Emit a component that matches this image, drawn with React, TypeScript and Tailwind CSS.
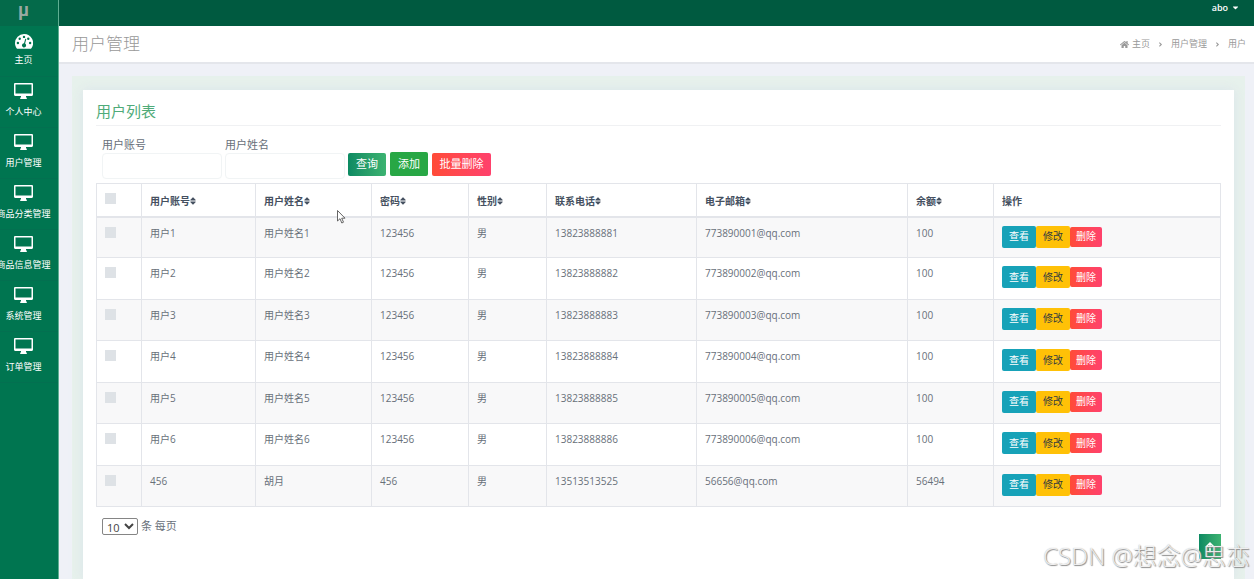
import { FaHome, FaSort, FaCaretDown, FaAngleRight } from "react-icons/fa";

type User = {
  account: string;
  name: string;
  password: string;
  gender: string;
  phone: string;
  email: string;
  balance: string;
};

const users: User[] = [
  ...[1, 2, 3, 4, 5, 6].map((n) => ({
    account: `用户${n}`,
    name: `用户姓名${n}`,
    password: "123456",
    gender: "男",
    phone: `1382388888${n}`,
    email: `77389000${n}@qq.com`,
    balance: "100",
  })),
  {
    account: "456",
    name: "胡月",
    password: "456",
    gender: "男",
    phone: "13513513525",
    email: "56656@qq.com",
    balance: "56494",
  },
];

const columns = [
  { label: "用户账号", width: "w-[114px]" },
  { label: "用户姓名", width: "w-[116px]" },
  { label: "密码", width: "w-[97px]" },
  { label: "性别", width: "w-[78px]" },
  { label: "联系电话", width: "w-[150px]" },
  { label: "电子邮箱", width: "w-[211px]" },
  { label: "余额", width: "w-[86px]" },
];

const menu = ["个人中心", "用户管理", "商品分类管理", "商品信息管理", "系统管理", "订单管理"];

const DashboardIcon = () => (
  <svg viewBox="0 0 18 15" className="h-[15px] w-[18px]" aria-hidden="true">
    <path d="M9 0a9 9 0 0 0-9 9c0 2 .6 3.700 1.600 5.200.3.500.7.600 1.200.600h12.400c.5 0 .9-.1 1.200-.6A9 9 0 0 0 9 0z" fill="#fff" />
    <g fill="#007550">
      <circle cx="2.900" cy="9" r="1.200" />
      <circle cx="4.700" cy="4.800" r="1.200" />
      <circle cx="9" cy="2.900" r="1.200" />
      <circle cx="13.300" cy="4.800" r="1.200" />
      <circle cx="15.100" cy="9" r="1.200" />
      <path d="M10.300 4.800l1 .3-1.200 4.500a2.100 2.100 0 1 1-1.100-.3z" />
    </g>
  </svg>
);

const MonitorIcon = () => (
  <svg viewBox="0 0 19 16" className="h-4 w-[19px]" aria-hidden="true">
    <path
      fill="#fff"
      fillRule="evenodd"
      d="M1.200 0h16.600c.7 0 1.200.5 1.200 1.200v10.600c0 .7-.5 1.200-1.200 1.200H12v1.500h.8V16H6.200v-1.500H7V13H1.200C.5 13 0 12.500 0 11.800V1.200C0 .5.500 0 1.200 0zM1.500 1.400v9h16v-9z"
    />
  </svg>
);

const Sidebar = () => (
  <aside className="w-[59px] shrink-0 overflow-hidden border-r border-[#5fae92] bg-[#007550] text-[9px] text-white">
    <div className="flex h-[26px] items-start justify-center bg-[#046a4a] pr-[11px] font-['Roboto'] text-lg leading-5 font-bold text-[#9aa9a2]">
      μ
    </div>
    <nav>
      <a href="#" className="flex h-[51px] flex-col items-center gap-1 border-b border-[#037050] pt-2 pr-[11px]">
        <DashboardIcon />
        <span className="leading-[14px] whitespace-nowrap">主页</span>
      </a>
      {menu.map((item) => (
        <a
          key={item}
          href="#"
          className="flex h-[51px] flex-col items-center gap-[6px] border-b border-[#037050] pt-[6px] pr-[11px]"
        >
          <MonitorIcon />
          <span className="leading-[14px] whitespace-nowrap">{item}</span>
        </a>
      ))}
    </nav>
  </aside>
);

const SearchField = ({ id, label }: { id: string; label: string }) => (
  <div className="w-[120px]">
    <label htmlFor={id} className="block text-[11px] leading-4">
      {label}
    </label>
    <input id={id} type="text" className="block h-[26px] w-full rounded-sm border border-[#f1f4f5] bg-white px-2" />
  </div>
);

const UserTable = () => (
  <table className="h-[324px] w-full table-fixed border-collapse text-left text-[10px] leading-[15px]">
    <thead>
      <tr className="h-[33px] border-b-2 border-[#dee2e6]">
        <th className="w-[45px] border border-b-2 border-[#e3e5ea] px-2 align-top">
          <input type="checkbox" aria-label="全选" className="mt-[9px] block size-[11px] appearance-none bg-[#dee2e6]" />
        </th>
        {columns.map((col) => (
          <th key={col.label} className={`${col.width} border border-b-2 border-[#e3e5ea] px-2 font-bold text-[#455060]`}>
            <span className="flex items-center pt-[3px]">
              {col.label}
              <FaSort className="h-[10px] w-[6px] shrink-0" />
            </span>
          </th>
        ))}
        <th className="border border-b-2 border-[#e3e5ea] px-2 pt-[3px] font-bold text-[#455060]">操作</th>
      </tr>
    </thead>
    <tbody>
      {users.map((user) => (
        <tr key={user.account} className="h-[41px] odd:bg-[#f8f8f9]">
          <td className="border border-[#e3e5ea] px-2 py-2 align-top">
            <input
              type="checkbox"
              aria-label={user.account}
              className="mt-px block size-[11px] appearance-none bg-[#dee2e6]"
            />
          </td>
          {Object.values(user).map((value, i) => (
            <td key={i} className="border border-[#e3e5ea] px-2 py-2 align-top">
              {value}
            </td>
          ))}
          <td className="border border-[#e3e5ea] px-2 py-2 align-top">
            <div className="flex items-center text-[10px] leading-[15px]">
              <button className="h-[22px] w-[34px] rounded-xs bg-[#17a2b8] text-white">查看</button>
              <button className="h-[22px] w-[34px] rounded-xs bg-[#ffc107] text-[#343a40]">修改</button>
              <button className="h-5 w-8 rounded-xs bg-linear-to-r from-[#ff4b36] to-[#ff416c] text-white">删除</button>
            </div>
          </td>
        </tr>
      ))}
    </tbody>
  </table>
);

const App = () => {
  return (
    <div className="relative flex h-screen overflow-hidden bg-[#eff1f7] font-['Open_Sans','Noto_Sans_CJK_SC',sans-serif] text-[#68707a]">
      <Sidebar />
      <div className="flex min-w-0 flex-1 flex-col">
        <header className="flex h-[26px] shrink-0 items-start justify-end bg-[#005a40] px-[14px] text-[9px] leading-[15px] font-semibold text-white">
          <button className="flex items-center gap-[3px]">
            abo <FaCaretDown className="size-[9px]" />
          </button>
        </header>
        <div className="flex h-[38px] shrink-0 items-center justify-between border-b-2 border-[#e4e6eb] bg-white pr-2 pl-[13px] text-[#999]">
          <h1 className="text-[17px] font-light">用户管理</h1>
          <nav className="flex items-center gap-[7px] text-[9px]">
            <a href="#" className="flex items-center gap-[3px]">
              <FaHome className="size-[9px]" /> 主页
            </a>
            <FaAngleRight className="size-[7px]" />
            <a href="#">用户管理</a>
            <FaAngleRight className="size-[7px]" />
            <span>用户</span>
          </nav>
        </div>
        <main className="mt-3 mr-[9px] ml-[13px] flex flex-1 flex-col bg-[#e7f1ec] px-[11px] pt-[14px]">
          <section className="flex-1 bg-white px-[13px] pt-[11px] shadow-[0_0_10px_rgba(210,220,235,0.6)]">
            <h2 className="border-b border-[#f0f1f3] pb-1 text-[15px] leading-5 text-[#4fab79]">用户列表</h2>
            <form className="flex items-end gap-[3px] px-1.5 pt-[11px] pb-1">
              <SearchField id="account" label="用户账号" />
              <SearchField id="name" label="用户姓名" />
              <div className="mb-[3px] flex items-center gap-1 text-[11px] leading-4 text-white">
                <button type="button" className="h-[23px] w-[38px] rounded-xs bg-linear-to-r from-[#0b8a62] to-[#3cb371]">
                  查询
                </button>
                <button type="button" className="h-6 w-[38px] rounded-xs bg-[#28a745]">
                  添加
                </button>
                <button type="button" className="h-[23px] w-[59px] rounded-xs bg-linear-to-r from-[#ff4b36] to-[#ff416c]">
                  批量删除
                </button>
              </div>
            </form>
            <UserTable />
            <div className="flex items-center px-1.5 pt-[11px] text-[11px]">
              <label className="flex items-center gap-[3px]">
                <select className="h-[17px] w-9 rounded-xs border border-[#858585] bg-white font-['Open_Sans'] text-[11px] leading-none text-[#444]">
                  <option>10</option>
                </select>
                条 每页
              </label>
            </div>
          </section>
        </main>
      </div>
      <button
        aria-label="返回顶部"
        className="absolute right-[33px] bottom-5 flex h-[25px] w-[22px] items-center justify-center bg-linear-to-r from-[#0b8a62] to-[#3cb371] text-white"
      >
        <svg viewBox="0 0 10 12" className="h-3 w-2.5" fill="none" stroke="currentColor" strokeWidth="1.500" aria-hidden="true">
          <path d="M5 12V2M1.500 5.500L5 2l3.500 3.500" />
        </svg>
      </button>
      <div className="pointer-events-none absolute right-1 bottom-[5px] text-2xl leading-9 font-light whitespace-nowrap text-white/80 [text-shadow:1px_1px_1px_#888,0_0_1px_#aaa]">
        CSDN @想念@思恋
      </div>
      <svg viewBox="0 0 10 14" className="pointer-events-none absolute top-[210px] left-[337px] h-[14px] w-2.5" aria-hidden="true">
        <path d="M.5.5v10.500l2.500-2.300 1.800 4.300 1.700-.8-1.800-4H8z" fill="#fff" stroke="#555" strokeWidth=".9" />
      </svg>
    </div>
  );
};

export default App;
